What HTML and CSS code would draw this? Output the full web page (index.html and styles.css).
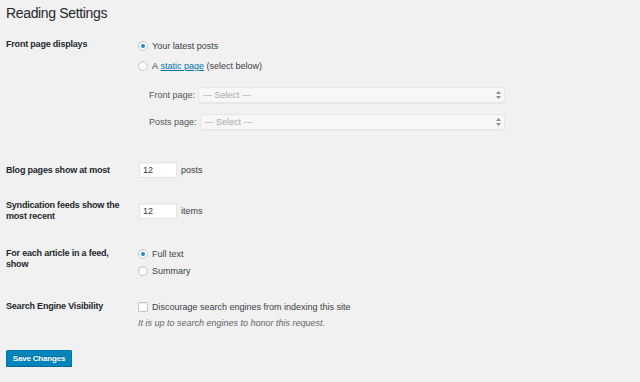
FILE: index.html
```html
<!DOCTYPE html>
<html lang="en">
<head>
<meta charset="utf-8">
<title>Reading Settings</title>
<link rel="stylesheet" href="styles.css">
</head>
<body>
<main class="wrap">
  <h1 class="title">Reading Settings</h1>
  <div class="form-table">
    <div class="row row-front">
      <div class="th">Front page displays</div>
      <div class="td td-front">
        <label class="choice"><span class="radio is-checked"></span>Your latest posts</label>
        <label class="choice choice-gap"><span class="radio"></span>A&nbsp;<a class="link" href="#">static page</a>&nbsp;(select below)</label>
        <div class="sub">
          <div class="sub-row">
            <span class="sub-label">Front page:</span>
            <span class="select"><span class="select-text">— Select —</span>
              <svg class="arrows" width="5" height="8" viewBox="0 0 5 8"><path d="M2.5 0 L5 3 L0 3 Z M0 5 L5 5 L2.5 8 Z" fill="#8a8f94"/></svg>
            </span>
          </div>
          <div class="sub-row sub-row-2">
            <span class="sub-label">Posts page:</span>
            <span class="select"><span class="select-text">— Select —</span>
              <svg class="arrows" width="5" height="8" viewBox="0 0 5 8"><path d="M2.5 0 L5 3 L0 3 Z M0 5 L5 5 L2.5 8 Z" fill="#8a8f94"/></svg>
            </span>
          </div>
        </div>
      </div>
    </div>

    <div class="row row-blog">
      <div class="th th-blog">Blog pages show at most</div>
      <div class="td td-inline">
        <span class="num-input">12</span><span class="unit">posts</span>
      </div>
    </div>

    <div class="row row-feed">
      <div class="th">Syndication feeds show the most recent</div>
      <div class="td td-inline td-feed">
        <span class="num-input">12</span><span class="unit">items</span>
      </div>
    </div>

    <div class="row row-article">
      <div class="th">For each article in a feed, show</div>
      <div class="td">
        <label class="choice"><span class="radio is-checked"></span>Full text</label>
        <label class="choice choice-gap-sm"><span class="radio"></span>Summary</label>
      </div>
    </div>

    <div class="row row-search">
      <div class="th">Search Engine Visibility</div>
      <div class="td">
        <label class="choice"><span class="checkbox"></span>Discourage search engines from indexing this site</label>
        <p class="note">It is up to search engines to honor this request.</p>
      </div>
    </div>
  </div>
  <button class="button-primary" type="button">Save Changes</button>
</main>
</body>
</html>
```

FILE: styles.css
```css
html, body {
  margin: 0;
  padding: 0;
  background: #f1f1f1;
}
body {
  font-family: "Liberation Sans", Arial, sans-serif;
  color: #23282d;
  font-size: 9px;
}
.wrap {
  padding: 0 6px;
}
.title {
  margin: 0;
  padding-top: 4px;
  font-size: 14px;
  line-height: 18px;
  font-weight: 400;
  letter-spacing: -0.35px;
  color: #23282d;
}
.form-table {
  margin-top: 17px;
}
.row {
  display: flex;
  align-items: flex-start;
}
.th {
  width: 132px;
  flex: none;
  font-weight: 700;
  letter-spacing: -0.2px;
  line-height: 11px;
  padding-right: 6px;
  box-sizing: border-box;
}
.td {
  flex: 1;
  color: #3c3f42;
}
.td-front {
  padding-top: 1px;
}
.choice {
  display: flex;
  align-items: center;
  height: 12px;
  line-height: 12px;
  white-space: nowrap;
}
.choice-gap {
  margin-top: 8px;
}
.choice-gap-sm {
  margin-top: 5px;
}
.radio, .checkbox {
  width: 10px;
  height: 10px;
  box-sizing: border-box;
  border: 1px solid #c3c7cb;
  background: #fff;
  box-shadow: inset 0 1px 1px rgba(0,0,0,0.08);
  margin-right: 4px;
  flex: none;
  display: flex;
  align-items: center;
  justify-content: center;
}
.radio {
  border-radius: 50%;
}
.radio.is-checked::before {
  content: "";
  width: 4px;
  height: 4px;
  border-radius: 50%;
  background: #1e8cbe;
}
.link {
  color: #0073aa;
  text-decoration: underline;
}
.sub {
  margin-top: 15px;
  width: 367px;
}
.sub-row {
  display: flex;
  align-items: center;
  padding-left: 11px;
  height: 16px;
}
.sub-row-2 {
  margin-top: 11px;
}
.sub-label {
  margin-right: 3px;
  color: #555;
  white-space: nowrap;
}
.select {
  flex: 1;
  height: 16px;
  box-sizing: border-box;
  background: #f7f7f7;
  border: 1px solid #e6e6e6;
  border-radius: 3px;
  box-shadow: 0 1px 1px rgba(0,0,0,0.04);
  display: flex;
  align-items: center;
  justify-content: space-between;
  padding: 0 3px 0 4px;
}
.select-text {
  color: #a7aaad;
}
.arrows {
  display: block;
}
.row-blog {
  margin-top: 32px;
}
.th-blog {
  padding-top: 3px;
}
.td-inline {
  display: flex;
  align-items: center;
}
.num-input {
  width: 38px;
  height: 16px;
  box-sizing: border-box;
  background: #fff;
  border: 1px solid #e4e4e4;
  box-shadow: inset 0 1px 1px rgba(0,0,0,0.05);
  padding-left: 3px;
  line-height: 14px;
  margin-left: 1px;
  color: #32373c;
}
.unit {
  margin-left: 4px;
  line-height: 12px;
}
.row-feed {
  margin-top: 22px;
}
.td-feed {
  padding-top: 3px;
}
.row-article {
  margin-top: 26px;
}
.row-search {
  margin-top: 24px;
}
.checkbox {
  border-radius: 1px;
}
.note {
  margin: 5px 0 0;
  line-height: 11px;
  font-style: italic;
  color: #666;
}
.button-primary {
  display: block;
  margin: 21px 0 0;
  width: 66px;
  height: 17px;
  padding: 0;
  box-sizing: border-box;
  background: #0085ba;
  border: 1px solid #0073aa;
  border-bottom-color: #006799;
  border-radius: 2px;
  box-shadow: 0 1px 0 #006799;
  color: #fff;
  font-family: "Liberation Sans", Arial, sans-serif;
  font-weight: 700;
  font-size: 8px;
  letter-spacing: -0.2px;
  line-height: 15px;
  text-shadow: 0 -1px 1px #006799;
}
```
